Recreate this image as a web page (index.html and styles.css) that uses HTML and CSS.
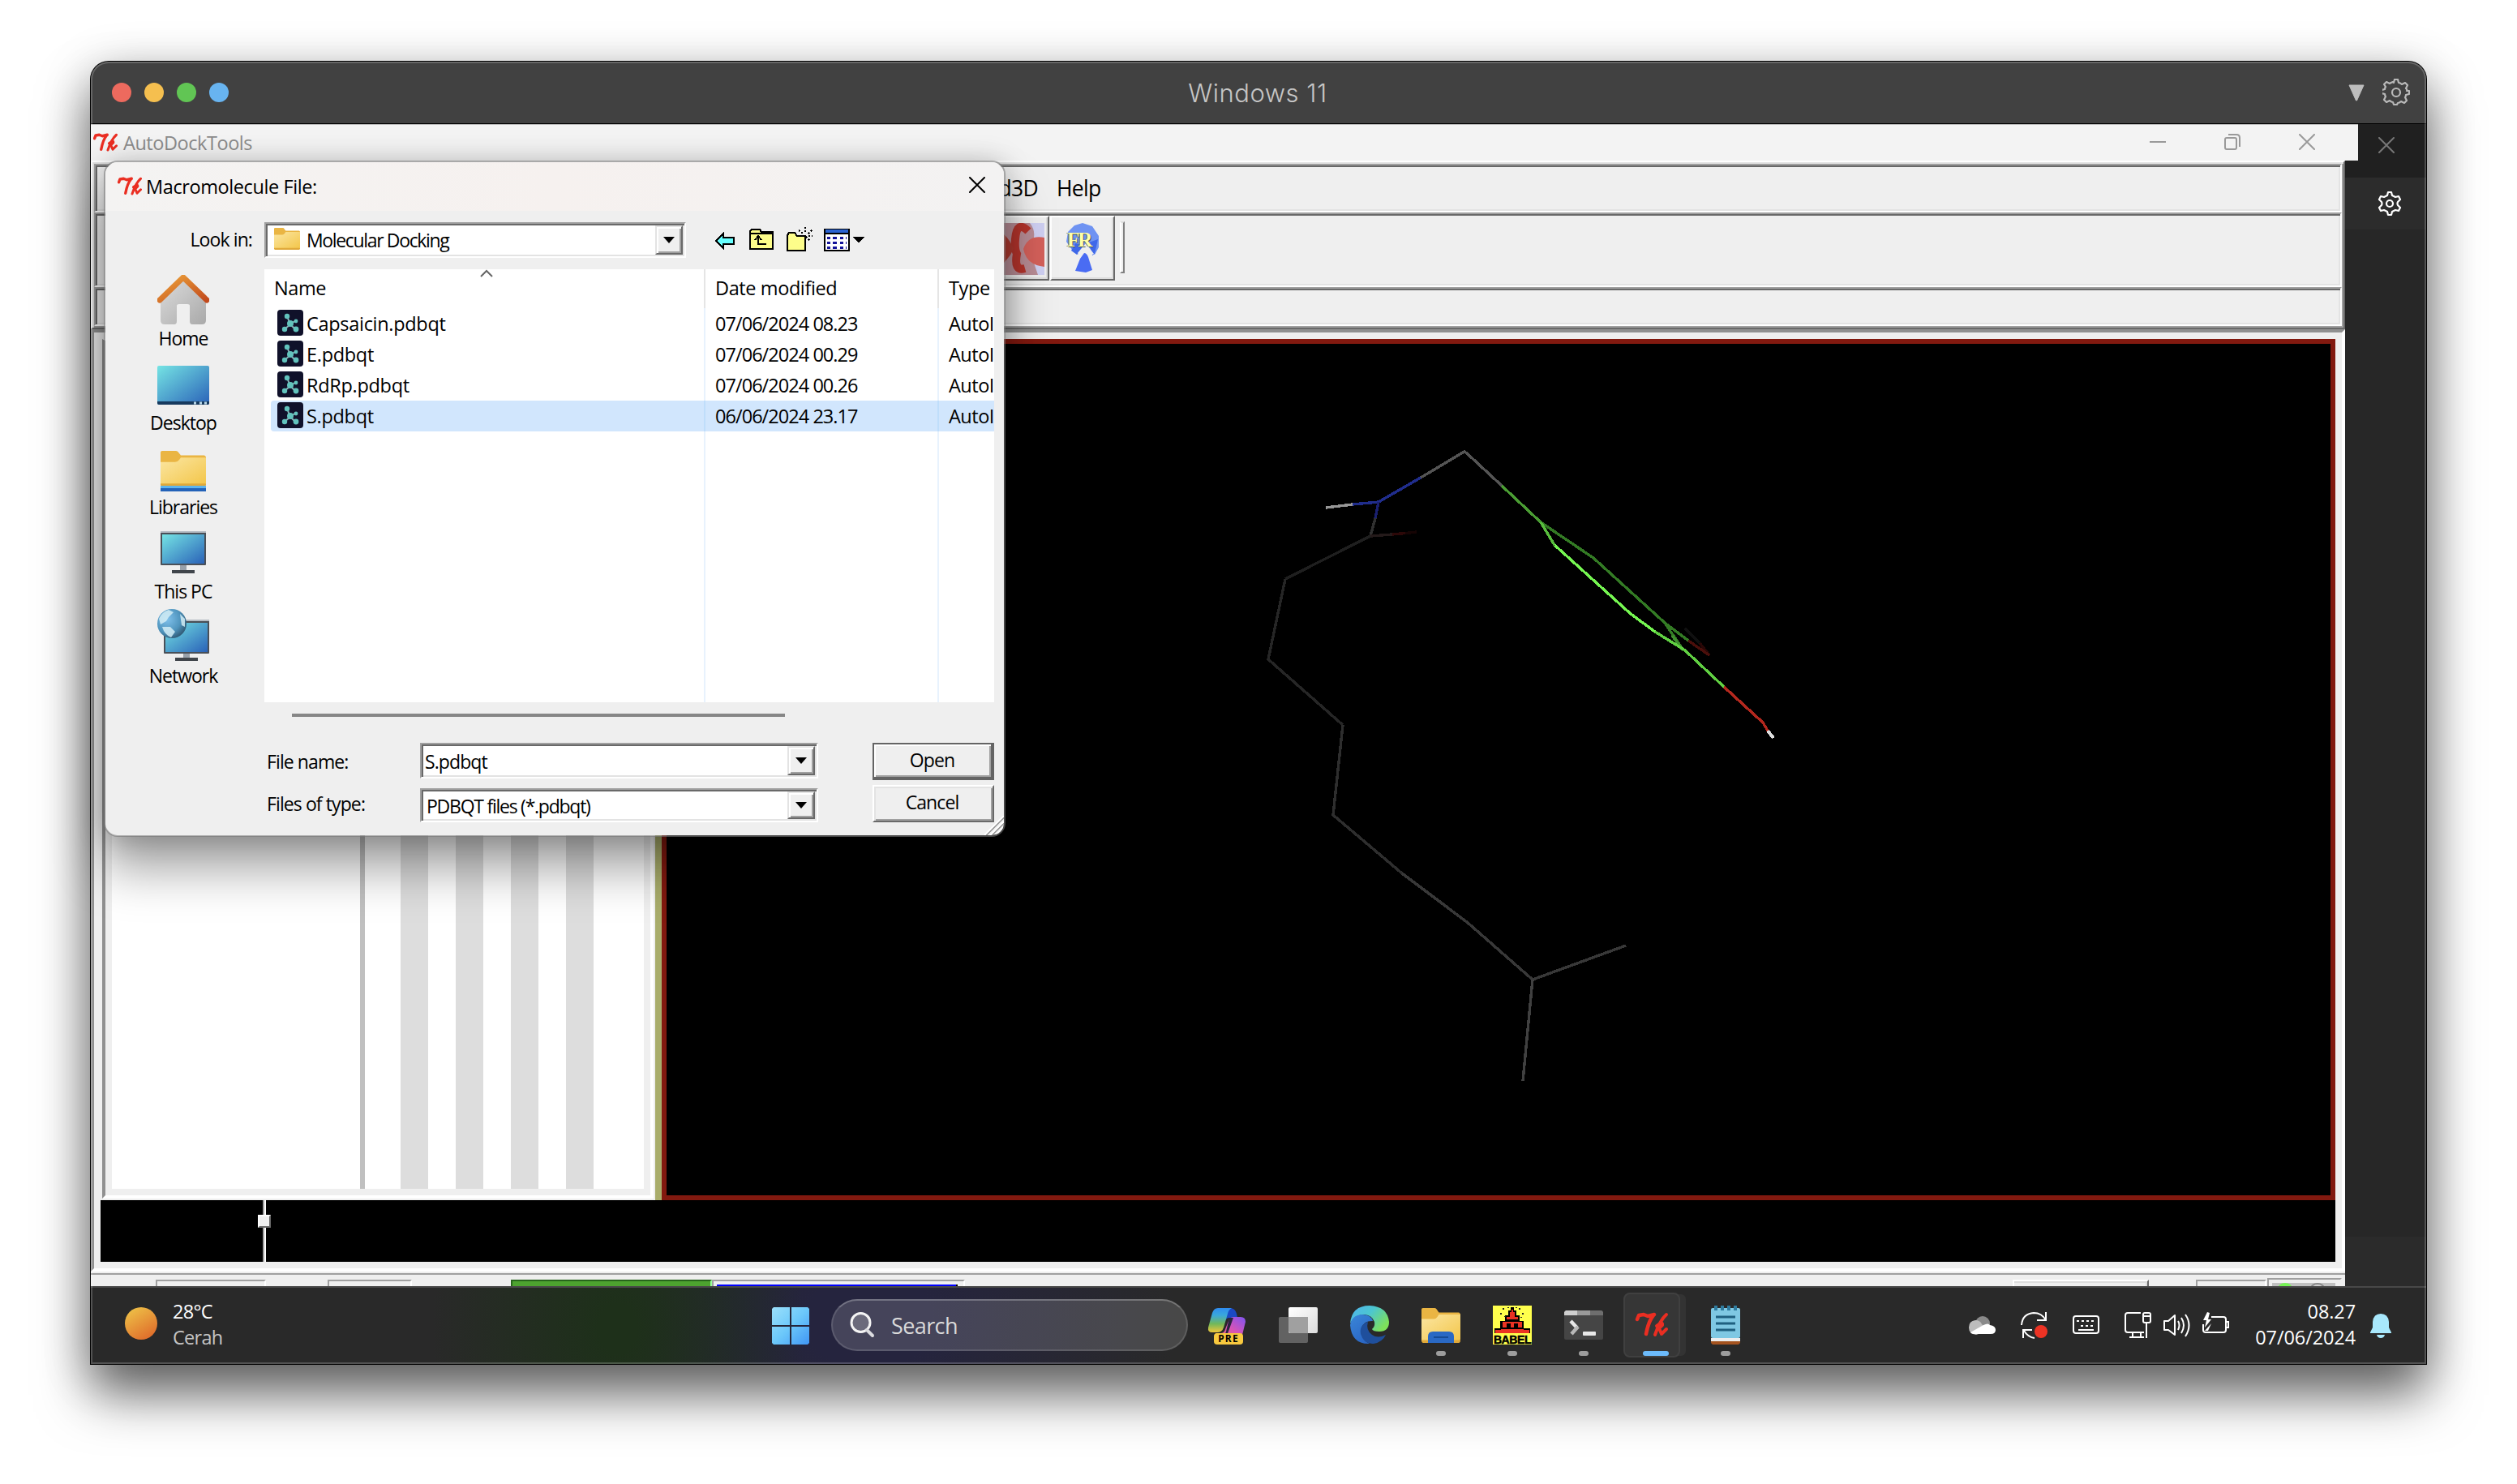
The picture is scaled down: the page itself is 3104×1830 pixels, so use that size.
FILE: index.html
```html
<!DOCTYPE html>
<html lang="en">
<head>
<meta charset="utf-8">
<title>Windows 11</title>
<link rel="stylesheet" href="styles.css">
</head>
<body>
<svg class="defs" aria-hidden="true">
  <defs>
    <linearGradient id="gFolder" x1="0" y1="0" x2="1" y2="1"><stop offset="0" stop-color="#fbe6a2"/><stop offset="1" stop-color="#f3c64a"/></linearGradient>
    <linearGradient id="gScreen" x1="0" y1="0" x2="1" y2="1"><stop offset="0" stop-color="#75e4e4"/><stop offset="1" stop-color="#2a62b8"/></linearGradient>
    <linearGradient id="gRoof" x1="0" y1="0" x2="1" y2="1"><stop offset="0" stop-color="#eda33a"/><stop offset="1" stop-color="#c24a1c"/></linearGradient>
    <linearGradient id="gWall" x1="0" y1="0" x2="1" y2="1"><stop offset="0" stop-color="#dcdcdc"/><stop offset="1" stop-color="#a9a9a9"/></linearGradient>
    <radialGradient id="gGlobe" cx=".35" cy=".35" r=".75"><stop offset="0" stop-color="#7fc0ea"/><stop offset=".6" stop-color="#4f94bd"/><stop offset="1" stop-color="#2b4f68"/></radialGradient>
    <linearGradient id="gSun" x1="0" y1="0" x2=".6" y2="1"><stop offset="0" stop-color="#efc94a"/><stop offset="1" stop-color="#e0702c"/></linearGradient>
    <linearGradient id="gWin" x1="0" y1="0" x2="1" y2="1"><stop offset="0" stop-color="#9be0fb"/><stop offset=".5" stop-color="#6cc8fa"/><stop offset="1" stop-color="#4096f5"/></linearGradient>
    <symbol id="tk" viewBox="0 0 40 32">
      <g fill="none" stroke="#ea2e22" stroke-linecap="round" stroke-linejoin="round">
        <path stroke-width="4.500" d="M2 9l2-5 6-1 5 2 8-2M22 4q-6 7-9 23"/>
        <path stroke-width="4" d="M38 3q-8 7-14 25M26 17q8-6 7-1l-5 5M29 20l3 7 6-6"/>
      </g>
    </symbol>
    <symbol id="pdb" viewBox="0 0 32 32">
      <rect width="32" height="32" rx="4" fill="#10112a"/>
      <path d="M12 8l4 10-7 6M16 18l7-5M16 18l7 7" stroke="#8cb0b8" stroke-width="2" fill="none"/>
      <g fill="#62c3bd"><circle cx="12" cy="8" r="3.2"/><circle cx="16" cy="17" r="4"/><circle cx="23" cy="14" r="2.4"/><circle cx="9" cy="24" r="3.2"/><circle cx="23" cy="24" r="3.4"/></g>
    </symbol>
    <symbol id="folder" viewBox="0 0 56 48" preserveAspectRatio="none">
      <path d="M0 2q0-2 2-2h17q2 0 3 2l3 4h29l2 2v8H0z" fill="#eab543"/><path d="M0 15h18q3 0 5-3l2-3h31v34q0 2-2 2H0z" fill="url(#gFolder)"/><path d="M0 44h56v1q0 3-2 3H2q-2 0-2-3z" fill="#e0a93a"/>
    </symbol>
    <symbol id="x" viewBox="0 0 20 20"><path d="M1 1l18 18M19 1L1 19" stroke="currentColor" stroke-width="2" fill="none" stroke-linecap="round"/></symbol>
    <symbol id="drop" viewBox="0 0 14 8"><path d="M0 0h14L7 8z"/></symbol>
  </defs>
</svg>

<main class="window">
  <header class="mac-bar">
    <div class="lights"><i class="red"></i><i class="yellow"></i><i class="green"></i><i class="blue"></i></div>
    <h1>Windows 11</h1>
    <div class="mac-tools">
      <svg width="20" height="21" viewBox="0 0 20 21"><path d="M1 1h18L10.500 20h-1z" fill="#bdbdbd" stroke="#bdbdbd" stroke-linejoin="round"/></svg>
      <svg width="34" height="34" viewBox="-17 -17 34 34" fill="none" stroke="#b9b9b9" stroke-width="2.200" stroke-linejoin="round"><circle r="5"/><path d="M-3-12l1-4h4l1 4q2 0 4 2l4-2 3 3-2 4q2 2 1 3l3 0v4l-4 1q0 2-1 3l2 4-3 3-4-2q-2 2-4 2l-1 2h-4l-1-3q-2 0-4-2l-4 2-3-3 2-4q-1-1-1-3l-4-1v-4l4-1q0-2 1-3l-2-3 3-3 4 2q1-1 4-2z"/></svg>
    </div>
  </header>

  <div class="desk-top">
    <div class="tk-title">
      <svg class="tk-ico" width="30" height="26"><use href="#tk"/></svg><span>AutoDockTools</span>
      <div class="tk-ctl">
        <svg width="20" height="20"><path d="M0 10h20" stroke="#999" stroke-width="2"/></svg>
        <svg width="20" height="20" fill="none" stroke="#999" stroke-width="2"><rect x="1" y="5" width="14" height="14" rx="2"/><path d="M5 1h10q4 0 4 4v11"/></svg>
        <svg width="20" height="20"><use href="#x"/></svg>
      </div>
    </div>
    <div class="side-x"><svg width="20" height="20"><use href="#x"/></svg></div>
  </div>

  <div class="desk">
    <div class="tk-body">
      <div class="bars">
        <div class="bar menu"><span>Grid3D</span><span>Help</span></div>
        <div class="bar tools">
          <div class="tool">
            <svg width="64" height="64" viewBox="0 0 64 64"><rect width="64" height="64" fill="#cfd0f2"/><path d="M10 0h36q8 10 4 22v24l6 18H10z" fill="#b98d96"/><path d="M44 10q-14-14-16 10-1 12 2 18-4 22 10 18" fill="none" stroke="#b5342c" stroke-width="10"/><path d="M64 18q-20-4-26 14 4 20 26 22z" fill="#d4605a"/><path d="M0 6q18 6 26 26-8 18-26 26z" fill="#b23a30"/></svg>
          </div>
          <div class="tool fr">
            <svg width="48" height="64" viewBox="0 0 48 64"><path d="M14 4l10-3 12 4 8 12v14l-5 9-11-12-10 12-7-6-7-10 2-12z" fill="#6f93f2"/><path d="M15 26l10 3-8 11-7-5zM32 25l11-4-4 18-3 2z" fill="#3f68e8"/><path d="M18 38l10-12 10 13-4 2H20z" fill="#efefef"/><path d="M26 38q3 0 5 5l5 16-8 3-13-2 6-15z" fill="#4a6cf3"/></svg>
            <b>FR</b>
          </div>
          <i class="grip"></i>
        </div>
        <div class="bar last"></div>
      </div>

      <div class="stage">
        <div class="viewer">
          <div class="tree">
            <div class="tree-in"><div class="names"></div><i></i><i></i><i></i><i></i></div>
          </div>
          <div class="sash"></div>
          <div class="canvas">
            <svg width="2052" height="1050" viewBox="822 424 2052 1050" fill="none" stroke-width="3.400" shape-rendering="crispEdges">
              <path d="M1635 626l33-4" stroke="#969696"/>
              <path d="M1668 622l32-3 52-30" stroke="#202d8c"/>
              <path d="M1700 619l-4 20" stroke="#1a2070"/>
              <path d="M1752 589l52-31 2-1 3 2 43 40" stroke="#545454"/>
              <path d="M1696 639l-6 22" stroke="#303030"/>
              <path d="M1690 661l27-2" stroke="#241a1a"/>
              <path d="M1717 659l16-1.500" stroke="#2c0808"/>
              <path d="M1733 657.500l14-1.500" stroke="#160404"/>
              <path d="M1690 661l-105 53" stroke="#1f1f1f"/>
              <path d="M1585 714l-21 99 92 81" stroke="#262626"/>
              <path d="M1656 894l-12 111 85 72" stroke="#2e2e2e"/>
              <path d="M1729 1077l80 60 81 71 115-42" stroke="#383838"/>
              <path d="M1890 1208l-12 125" stroke="#404040"/>
              <path d="M1852 599l48 45" stroke="#4a9c33"/>
              <path d="M1900 644l65 44 88 80 29 22M2053 768l23 34" stroke="#337a24"/>
              <path d="M2076 802l-14-18" stroke="#3f8f2e"/>
              <path d="M1900 644l17 28" stroke="#58bd3d"/>
              <path d="M1917 672l94 85 30 22" stroke="#75f551"/>
              <path d="M2041 779l37 23 48 45" stroke="#60cf42"/>
              <path d="M2078 775l18 18" stroke="#101010"/>
              <path d="M2096 793l12 15" stroke="#2a0706"/>
              <path d="M2082 790l26 18" stroke="#4b0f0b"/>
              <path d="M2126 847l48 44 6 10" stroke="#b3281e"/>
              <path d="M2180 901l7 9" stroke="#dedede" stroke-width="4"/>
            </svg>
          </div>
        </div>
        <div class="strip"><div class="slider"><i></i></div></div>
      </div>
      <div class="status">
        <i class="well w1"></i><i class="well w2"></i><i class="prog"></i><i class="well w3"><b></b></i>
        <i class="btn"></i><i class="well w4"></i><i class="well leds"><b><u></u><u class="off"></u></b></i>
      </div>
    </div>
    <aside class="side">
      <div class="side-a"></div>
      <div class="side-gear"><svg width="32" height="32" viewBox="-16 -16 32 32" fill="none" stroke="#fff" stroke-width="2.200" stroke-linejoin="round"><circle r="4"/><path d="M-3-10l1-4h4l1 4 4 2 4-1 2 4-3 3q-1 2 0 4l3 3-2 4-4-1-4 2-1 4h-4l-1-4-4-2-4 1-2-4 3-3q1-2 0-4l-3-3 2-4 4 1z"/></svg></div>
      <div class="side-b"></div>
      <div class="side-c"></div>
    </aside>
  </div>

  <footer class="taskbar">
    <svg class="sun" width="40" height="40"><circle cx="20" cy="20" r="20" fill="url(#gSun)"/></svg>
    <div class="weather"><span>28°C</span><span class="dim">Cerah</span></div>
    <svg class="start" width="46" height="46" viewBox="0 0 46 46" fill="url(#gWin)"><path d="M2 0h20v22H0V2zM24 0h20l2 2v20H24zM0 24h22v22H2l-2-2zM24 24h22v20l-2 2H24z"/></svg>
    <div class="search"><svg width="31" height="32" viewBox="0 0 31 32" fill="none"><circle cx="13.500" cy="13" r="11.500" fill="#6b6a7b" stroke="#f4f4f4" stroke-width="3"/><path d="M21 22l7 7" stroke="#dcdce0" stroke-width="4" stroke-linecap="round"/></svg><span>Search</span></div>
    <div class="apps">
      <div class="app pre">
        <svg width="48" height="48" viewBox="0 0 48 48"><defs><linearGradient id="c1" x1="0" y1="0" x2="0" y2="1"><stop offset="0" stop-color="#2f8cf0"/><stop offset=".3" stop-color="#3aa8dc"/><stop offset=".65" stop-color="#71b85a"/><stop offset="1" stop-color="#f0c53a"/></linearGradient><linearGradient id="c2" x1="1" y1="0" x2="0" y2="1"><stop offset="0" stop-color="#7e55f2"/><stop offset=".5" stop-color="#d553b8"/><stop offset="1" stop-color="#f2706a"/></linearGradient></defs><path d="M26 3q8-1 10 7l1 5H27q-5 0-7 8z" fill="#1b49c4"/><path d="M13 3h17q-4 2-5 7l-5 17q-2 6-8 6H6q-6 0-5-6L6 9q2-6 7-6z" fill="url(#c1)"/><path d="M32 14h9q6 0 6 6l-4 16-4 4H16q-6 0-6-6h6q5 0 6-5l4-10q2-5 6-5z" fill="url(#c2)"/><path d="M27 15h5l-8 22h-5q3-1 4-5z" fill="#2a2540"/></svg>
        <b>PRE</b>
      </div>
      <div class="app"><svg width="48" height="48" viewBox="0 0 48 48"><defs><linearGradient id="tv" x1="0" y1="0" x2="1" y2="1"><stop offset="0" stop-color="#fff"/><stop offset="1" stop-color="#dcdcdc"/></linearGradient></defs><rect y="14" width="36" height="32" rx="2" fill="#626262"/><rect x="12" y="2" width="36" height="32" rx="2" fill="url(#tv)"/><path d="M12 14h24v20H14l-2-2z" fill="#a0a0a0"/></svg></div>
      <div class="app"><svg width="48" height="48" viewBox="0 0 48 48"><defs><linearGradient id="e1" x1="0" y1="0" x2="1" y2=".6"><stop offset="0" stop-color="#4fb2f0"/><stop offset=".5" stop-color="#4cc6d0"/><stop offset="1" stop-color="#7ee05a"/></linearGradient><linearGradient id="e2" x1="0" y1="0" x2=".6" y2="1"><stop offset="0" stop-color="#3a86d8"/><stop offset="1" stop-color="#2a66c4"/></linearGradient></defs><path d="M0 22Q2 0 24 0q22 1 24 20 0 12-12 12-8 0-9-3 4-3 3-9-3-8-12-9Q5 11 0 22z" fill="url(#e1)"/><path d="M0 24q2-12 14-13 12 0 14 8-10-1-14 8-2 14 10 20Q2 48 0 24z" fill="url(#e2)"/><path d="M22 20q-11 4-9 15 4 13 16 12 11-2 15-11-10 5-17 0-8-6-5-16z" fill="#1f4f9c"/></svg></div>
      <div class="app run"><svg width="48" height="43"><use href="#folder"/><path d="M8 43V35q0-6 6-6h20q6 0 6 6v8z" fill="#2a69c4"/><path d="M15 36h18" stroke="#174b94" stroke-width="2"/></svg></div>
      <div class="app run babel">
        <svg width="48" height="48" viewBox="0 0 48 48" shape-rendering="crispEdges"><rect width="48" height="48" fill="#ffff4d"/><path d="M22 2h4v4h3v6h4v7h5v9h8v6H2v-6h7v-9h6v-7h4V6h3z" fill="#000"/><path d="M23 5h2v3h2v6h4v3H17v-3h4V8h2zM12 20h24v7h-5v-5h-5v5h-4v-5h-5v5h-5zM10 29h28v1h7v4H3v-4h7z" fill="#ea3323"/><path d="M12 3h2v2h-2zM32 3h2v2h-2zM9 9h2v2H9zM36 9h2v2h-2zM14 13h2v1h-2zM34 14h2v1h-2zM18 2h2v1h-2zM28 2h2v1h-2z" fill="#222"/></svg>
        <b>BABEL</b>
      </div>
      <div class="app run"><svg width="48" height="36"><rect width="48" height="36" rx="2" fill="#454545"/><path d="M0 6V2l2-2h14v6z" fill="#cfcfcf"/><path d="M16 0h16v6H16z" fill="#9a9a9a"/><path d="M32 0h14l2 2v4H32z" fill="#6e6e6e"/><path d="M8 13l8 8.500" stroke="#e8e8e8" stroke-width="4.500"/><path d="M17 20l-8 9" stroke="#b8b8b8" stroke-width="4.500"/><rect x="23" y="26" width="16" height="5" rx="1" fill="#e8e8e8"/></svg></div>
      <div class="app active"><svg width="42" height="32"><use href="#tk"/></svg></div>
      <div class="app run"><svg width="36" height="48"><rect y="3" width="36" height="37" rx="2" fill="#7fc8e3"/><path d="M0 40h36v4H0z" fill="#ededed"/><path d="M0 44h36v2l-2 2H2l-2-2z" fill="#a4531f"/><path d="M6 14h24M6 22h24M6 30h24" stroke="#1f6080" stroke-width="3"/><path d="M6 0v6M14 0v6M22 0v6M30 0v6" stroke="#2f7c9f" stroke-width="4"/></svg></div>
    </div>
    <div class="tray">
      <svg width="33" height="34" viewBox="0 0 33 34"><circle cx="17" cy="15" r="9" fill="#8a8a8a"/><path d="M0 20q0-8 8-9 6 0 8 5l8 8-15 5Q0 28 0 20z" fill="#bdbdbd"/><path d="M2 26l16-9q6-3 8 0 7 1 7 6 0 5-6 5H7q-4 0-5-2z" fill="#fff"/></svg>
      <svg class="sync" width="33" height="34" viewBox="0 0 33 34" fill="none" stroke="#fff" stroke-width="2"><path d="M1 17Q2 3 16 2q10 0 15 9M31 1v10H20M3 33V23h11M4 24q5 8 13 9"/><circle cx="25" cy="25" r="8" fill="#ed3324" stroke="none"/></svg>
      <svg width="33" height="34" viewBox="0 0 33 34" fill="none" stroke="#fff" stroke-width="2"><rect x="1" y="6" width="31" height="21" rx="3"/><path d="M5 12h23M10 18h17" stroke-dasharray="3 3"/><path d="M7 23h19"/></svg>
      <svg class="net" width="33" height="34" viewBox="0 0 33 34" fill="none" stroke="#fff" stroke-width="2"><path d="M20 2H4q-3 0-3 3v18q0 3 3 3h20M10 26v6M20 26v6M6 32h18M27 14v19"/><rect x="23" y="2" width="9" height="12" rx="2"/><path d="M23 6h9"/></svg>
      <svg width="33" height="34" viewBox="0 0 33 34" fill="none" stroke="#fff" stroke-width="2" stroke-linejoin="round"><path d="M1 12h5l8-7v24l-8-6H1zM18 12q3 5 0 11M22 8q6 9 0 19M27 4q9 13 0 27"/></svg>
      <svg width="33" height="34" viewBox="0 0 33 34" fill="none" stroke="#fff" stroke-width="2"><path d="M11 7h15q3 0 3 3v13q0 3-3 3H4q-3 0-3-3v-7M29 13h3v7h-3"/><path d="M6 1L1 11h4L3 20l8-10H7l2-8zM3 24l8-9-4 9z" fill="#fff" stroke="none"/></svg>
    </div>
    <div class="clock"><span>08.27</span><span>07/06/2024</span></div>
    <svg class="bell" width="26" height="31" viewBox="0 0 26 31" fill="#a8e8fc"><path d="M3 10Q4 0 13 0t10 10v7l3 6v1H0v-1l3-6zM8 26h10q-1 4-5 4t-5-4z"/></svg>
  </footer>

  <section class="dialog">
    <header class="dlg-title"><svg class="tk-ico" width="30" height="26"><use href="#tk"/></svg><span>Macromolecule File:</span><svg class="dlg-x" width="20" height="20"><use href="#x"/></svg></header>
    <div class="look">
      <label>Look in:</label>
      <div class="combo"><svg width="32" height="27"><use href="#folder"/></svg><span>Molecular Docking</span><i><svg width="14" height="8"><use href="#drop"/></svg></i></div>
      <svg class="nav" width="190" height="34" viewBox="880 278 190 34" shape-rendering="crispEdges" stroke="#000" stroke-width="2">
        <path d="M883 297l9-9v5h13v8h-13v5z" fill="#6ff"/>
        <path d="M925 307v-22l2-2h10l2 3h14v21z" fill="#fdfd8a"/><path d="M925 288h28M935 292v9h10M931 296l4-5 4 5" fill="none"/>
        <path d="M971 309v-19l2-3h7l3 4h10v18z" fill="#fdfd8a"/><path d="M993 280v7M985 284l5 4M1001 284l-5 5M994 292l6 6M997 291h5M985 291h5" stroke-dasharray="2 2" fill="none"/>
        <path d="M1017 283h30v26h-30z" fill="#fff"/><path d="M1018 285h28" stroke="#2a62d0" stroke-width="4"/><path d="M1017 288h30" /><path d="M1020 293h24M1020 299h24M1020 305h24" stroke="#14149a" stroke-width="3" stroke-dasharray="4 3 5 4"/>
        <path d="M1052 292h14l-7 8z" stroke="none"/>
      </svg>
    </div>
    <div class="mid">
      <nav class="places">
        <div><svg width="64" height="62" viewBox="0 0 64 62"><path d="M4 30L32 6l28 24v26q0 5-5 5H43q-3 0-3-4V38q0-2-3-2H27q-3 0-3 2v19q0 4-3 4H9q-5 0-5-5z" fill="url(#gWall)"/><path d="M3 31L32 3l29 28" fill="none" stroke="url(#gRoof)" stroke-width="7" stroke-linejoin="round" stroke-linecap="round"/></svg><span>Home</span></div>
        <div><svg width="64" height="62" viewBox="0 0 64 62"><rect y="8" width="64" height="48" rx="2" fill="url(#gScreen)"/><path d="M0 52h64v2q0 2-2 2H2q-2 0-2-2z" fill="#173a5e"/><path d="M45 54h3M52 54h3M58 54h3" stroke="#b9d8ea" stroke-width="3"/></svg><span>Desktop</span></div>
        <div><svg width="64" height="62" viewBox="0 0 64 62"><svg x="4" y="9" width="56" height="44"><use href="#folder"/></svg><path d="M4 52h56v3H4z" fill="#5db4ee"/><path d="M4 55h56v4H4z" fill="#2362b8"/></svg><span>Libraries</span></div>
        <div><svg width="64" height="62" viewBox="0 0 64 62"><rect x="4" y="4" width="56" height="42" rx="1" fill="#4a5058"/><path d="M4 4h56v2H4z" fill="#b5bcc4"/><rect x="6" y="8" width="52" height="36" fill="url(#gScreen)"/><path d="M28 46h8v6h-8z" fill="#99a1aa"/><path d="M18 52h28v4H18z" fill="#40454b"/></svg><span>This PC</span></div>
        <div><svg width="64" height="66" viewBox="0 -4 64 66"><rect x="8" y="9" width="56" height="42" rx="1" fill="#4a5058"/><path d="M8 9h56v2H8z" fill="#b5bcc4"/><rect x="10" y="13" width="52" height="36" fill="url(#gScreen)"/><path d="M32 51h8v5h-8z" fill="#99a1aa"/><path d="M22 56h28v4H22z" fill="#40454b"/><circle cx="18" cy="14" r="18" fill="url(#gGlobe)"/><path d="M2 8q3-8 12-11l6 3-6 6-3 5-7 4zM6 18l10 0 6 6-5 7q-8-3-11-13zM28 2l6 6v10l-4-2z" fill="#d3edf6" opacity=".85"/></svg><span>Network</span></div>
      </nav>
      <div class="list">
        <svg class="caret" width="16" height="10"><path d="M1 9l7-7 7 7" fill="none" stroke="#666" stroke-width="2"/></svg>
        <div class="head"><span>Name</span><span>Date modified</span><span>Type</span></div>
        <div class="row"><span><svg width="32" height="32"><use href="#pdb"/></svg>Capsaicin.pdbqt</span><span>07/06/2024 08.23</span><span>AutoI</span></div>
        <div class="row"><span><svg width="32" height="32"><use href="#pdb"/></svg>E.pdbqt</span><span>07/06/2024 00.29</span><span>AutoI</span></div>
        <div class="row"><span><svg width="32" height="32"><use href="#pdb"/></svg>RdRp.pdbqt</span><span>07/06/2024 00.26</span><span>AutoI</span></div>
        <div class="row sel"><span><svg width="32" height="32"><use href="#pdb"/></svg>S.pdbqt</span><span>06/06/2024 23.17</span><span>AutoI</span></div>
        <div class="row rest"><span></span><span></span><span></span></div>
      </div>
    </div>
    <div class="thumb"></div>
    <div class="form">
      <label>File name:</label>
      <div class="combo"><span>S.pdbqt</span><i><svg width="14" height="8"><use href="#drop"/></svg></i></div>
      <button class="default">Open</button>
      <label>Files of type:</label>
      <div class="combo short"><span>PDBQT files (*.pdbqt)</span><i><svg width="14" height="8"><use href="#drop"/></svg></i></div>
      <button>Cancel</button>
    </div>
    <svg class="resize" width="24" height="24" stroke="#8f8f8f" stroke-width="2"><path d="M2 24L24 2M9 24L24 9M16 24l8-8"/><path d="M0 24L24 0M7 24L24 7M14 24l10-10" stroke="#fff"/></svg>
  </section>
</main>
</body>
</html>
```

FILE: styles.css
```css
* { box-sizing: border-box; }
body { margin: 0; width: 3104px; height: 1830px; background: #fff; overflow: hidden; padding: 76px 112px; font-family: "Open Sans", "Noto Sans", sans-serif; font-size: 23.5px; color: #000; }
svg { display: block; flex: none; }
.defs { position: absolute; width: 0; height: 0; }
i, u { font-style: normal; text-decoration: none; display: block; }

.window { position: relative; width: 2880px; height: 1606px; display: flex; flex-direction: column; border-radius: 22px 22px 0 0; background: #272727; box-shadow: 0 0 0 1px #000, 0 38px 64px rgba(0,0,0,.56), 0 10px 60px rgba(0,0,0,.22); }
.window::after { content: ""; position: absolute; inset: 0; border-radius: 22px 22px 0 0; box-shadow: inset 0 0 0 2px rgba(255,255,255,.2); pointer-events: none; }

.mac-bar { height: 77px; flex: none; display: grid; grid-template-columns: 1fr auto 1fr; align-items: center; background: #414141; border-bottom: 1px solid #000; border-radius: 22px 22px 0 0; padding: 0 20px 0 18px; }
.lights { display: flex; gap: 16px; padding-left: 8px; }
.lights i { width: 24px; height: 24px; border-radius: 50%; }
.red { background: #ed6a5e; } .yellow { background: #f5bf4f; } .green { background: #61c554; } .blue { background: #68b4f0; }
.mac-bar h1 { margin: 0; font: 300 31px "Inter", "Liberation Sans", sans-serif; letter-spacing: .5px; color: #c6c6c6; }
.mac-tools { display: flex; gap: 22px; align-items: center; justify-content: flex-end; }

.desk-top { display: flex; height: 45px; flex: none; background: #202020; }
.tk-title { width: 2796px; display: flex; align-items: center; background: #f3f3f3; border-top: 1px solid #b8b8b8; color: #8c8c8c; padding: 0 53px 0 3px; }
.tk-title .tk-ico { margin-right: 7px; }
.tk-title span { letter-spacing: -.45px; }
.tk-ctl { margin: -3px 0 0 auto; display: flex; gap: 72px; color: #999; }
.side-x { padding: 16px 0 0 25px; color: #777; }

.desk { display: flex; height: 1388px; flex: none; }
.tk-body { width: 2780px; background: #efefef; display: flex; flex-direction: column; }
.bars { height: 208px; flex: none; border: 2px solid; border-color: #fff #696969 #696969 #fff; box-shadow: inset 2px 2px #e3e3e3, inset -2px -2px #a0a0a0; padding: 2px; }
.bar { border: 2px solid; border-color: #a0a0a0 #fff #fff #a0a0a0; box-shadow: inset 2px 2px #696969, inset -2px -2px #e3e3e3; }
.menu { height: 60px; padding: 0 0 0 1060px; display: flex; gap: 23px; justify-content: flex-start; line-height: 56px; font-size: 26.500px; }
.menu span { letter-spacing: -.7px; }
.menu span:first-child { width: 102px; text-align: right; }
.tools { height: 92px; display: flex; padding: 2px 0 0 1079px; }
.tool { width: 97px; height: 80px; border: 2px solid; border-color: #fff #696969 #696969 #fff; box-shadow: inset -2px -2px #ddd; padding: 7px 0 0 25px; }
.fr { width: 80px; margin-left: 1px; padding: 6px 0 0 14px; position: relative; }
.fr b { position: absolute; left: 19px; top: 13px; font: 700 25px/30px "Liberation Serif", serif; color: #ffffa8; text-shadow: 1px 1px #455, -1px 0 #667; letter-spacing: -2px; }
.grip { width: 6px; height: 64px; margin: 7px 0 0 6px; border: 2px solid; border-color: #ddd #808080 #808080 #fff; }
.last { height: 48px; border-top-color: #a0a0a0; }

.stage { border: 4px solid; border-color: #909090 #fff #fff #909090; padding: 8px; flex: none; }
.viewer { display: flex; height: 1062px; }
.tree { width: 680px; margin: 0 2px 2px; border: 4px solid #fff; border-top: 2px solid #fff; border-left-color: #909090; padding: 8px; }
.tree-in { height: 100%; background: #fff; display: flex; gap: 34px; }
.names { width: 312px; border-right: 6px solid #c0c0c0; margin-right: 10px; }
.tree-in i { width: 34px; background: #ddd; }
.sash { width: 8px; background: #a9ad6b; }
.canvas { flex: 1; background: #000; border: 6px solid #82190f; }
.strip { height: 76px; background: #000; padding-left: 194px; }
.slider { width: 16px; height: 76px; padding-top: 18px; background: linear-gradient(90deg, transparent 6px, #a0a0a0 6px 8px, #fff 8px 10px, transparent 10px); }
.slider i { height: 16px; background: #efefef; border: 2px solid; border-color: #fff #696969 #696969 #fff; }
.status { margin-top: 2px; height: 16px; border-top: 2px solid #a0a0a0; display: flex; align-items: flex-end; overflow: hidden; padding: 0 4px 0 80px; }
.well { height: 8px; border: 2px solid #a0a0a0; border-bottom: 0; border-right-color: #fff; }
.w1 { width: 136px; } .w2 { width: 104px; margin-left: 76px; }
.prog { width: 248px; height: 8px; margin-left: 122px; background: #4da32f; border-top: 2px solid #28651c; border-left: 2px solid #28651c; border-right: 2px solid #9f9; }
.w3 { width: 312px; padding: 4px 7px 0 4px; }
.w3 b { display: block; height: 4px; background: #00f; border-right: 2px solid #000; }
.btn { width: 168px; height: 8px; margin-left: auto; border: 2px solid #fff; border-bottom: 0; border-right-color: #696969; box-shadow: inset -2px 2px #ddd; }
.w4 { width: 87px; margin-left: 58px; }
.leds { width: 92px; height: 10px; margin-left: 1px; padding: 4px 6px 0 4px; border-right-color: #efefef; }
.leds b { display: flex; gap: 22px; height: 6px; background: #c0c0c0; padding-left: 7px; overflow: hidden; }
.leds u { width: 18px; height: 14px; border-radius: 50%; background: #76f455; }
.leds .off { background: #d0d0d0; border: 2px solid #888; }
.side { flex: 1; display: flex; flex-direction: column; }
.side-a { height: 21px; background: #202020; }
.side-gear { height: 64px; background: #2c2c2c; padding: 16px 0 0 39px; }
.side-b { height: 1242px; background: #272727; }
.side-c { flex: 1; background: #2b2b2b; }

.taskbar { flex: none; height: 96px; border-top: 2px solid #484848; background: radial-gradient(ellipse 230px 300px at 650px 50px, #1e301a 10%, transparent), radial-gradient(ellipse 380px 300px at 960px 40px, #25243e 20%, transparent), #292929; display: flex; align-items: flex-start; color: #fff; }
.sun { margin: 24px 0 0 42px; }
.weather { width: 140px; margin: 13px 0 0 19px; display: flex; flex-direction: column; line-height: 32px; letter-spacing: -.7px; }
.dim { color: #c4c4c4; }
.start { margin: 24px 0 0 599px; }
.search { margin: 14px 0 0 27px; width: 440px; height: 64px; border-radius: 32px; border: 2px solid rgba(255,255,255,.12); border-top-color: rgba(255,255,255,.25); background: rgba(255,255,255,.15); display: flex; align-items: center; gap: 20px; padding-left: 21px; color: #dadada; font-size: 27px; line-height: 60px; letter-spacing: -.6px; }
.search span { padding-top: 2px; }
.apps { display: flex; margin-left: 4px; }
.app { position: relative; width: 88px; height: 92px; display: flex; align-items: center; justify-content: center; }
.run::after { content: ""; position: absolute; left: 38px; top: 78px; width: 12px; height: 6px; border-radius: 3px; background: #9d9d9d; }
.pre b { position: absolute; left: 28px; top: 56px; width: 36px; height: 14px; border-radius: 4px; background: #f8c93f; color: #000; font: 700 12px/14px "Noto Sans", sans-serif; text-align: center; letter-spacing: 1.200px; }
.babel b { position: absolute; left: 20px; top: 57px; width: 48px; text-align: center; color: #000; font: 700 14px/14px "Liberation Sans", sans-serif; letter-spacing: -.4px; -webkit-text-stroke: .5px #000; }
.active { width: 70px; height: 80px; margin: 6px 12px 0 5px; border-radius: 8px; background: #363636; border: 2px solid #404040; box-shadow: 9px 0 0 -2px #333; padding-bottom: 0; }
.active::after { content: ""; position: absolute; left: 22px; top: 70px; width: 32px; height: 6px; border-radius: 3px; background: #6cbbfb; }
.tray { display: flex; margin: 29px 0 0 auto; gap: 31px; }
.tray .net { margin-right: -16px; }
.tray svg:last-child { margin-left: -16px; }
.clock { width: 156px; margin: 13px 0 0; text-align: right; display: flex; flex-direction: column; line-height: 32px; letter-spacing: -.1px; }
.bell { margin: 32px 43px 0 18px; }

.dialog { position: absolute; left: 16px; top: 122px; width: 1112px; height: 834px; border-radius: 17px; background: #efefef; border: 2px solid rgba(120,120,120,.6); background-clip: padding-box; box-shadow: 0 40px 60px rgba(0,0,0,.36), 0 2px 34px rgba(0,0,0,.22); display: flex; flex-direction: column; overflow: hidden; }
.dlg-title { height: 60px; flex: none; background: linear-gradient(90deg, #f4f3f2, #f6f1ef 50%, #f3f2f2); display: flex; align-items: center; padding: 0 23px 0 15px; }
.dlg-title span { margin-left: 5px; letter-spacing: -.4px; }
.dlg-x { margin: -4px 0 0 auto; }
.look { height: 72px; flex: none; display: grid; grid-template-columns: 181px 520px auto; column-gap: 15px; padding-top: 14px; align-items: start; letter-spacing: -.9px; font-size: 23px; }
.look label { text-align: right; line-height: 43px; }
.look .nav { margin: 4px 0 0 19px; }
.combo { height: 44px; background: #fff; border: 2px solid; border-color: #a0a0a0 #fff #fff #a0a0a0; box-shadow: inset 2px 2px #696969, inset -2px -2px #e3e3e3; display: flex; align-items: center; padding: 2px; line-height: 40px; }
.look .combo svg:first-child { margin: -3px 8px 0 8px; }
.look .combo span { letter-spacing: -1.35px; }
.combo i { margin: 0 0 0 auto; width: 34px; height: 100%; background: #efefef; border: 2px solid; border-color: #e3e3e3 #696969 #696969 #e3e3e3; box-shadow: inset 2px 2px #fff, inset -2px -2px #a0a0a0; display: flex; align-items: center; justify-content: center; }
.look .combo i svg:first-child { margin: 0; }
.mid { display: flex; height: 534px; flex: none; }
.places { width: 192px; margin-right: 4px; display: flex; flex-direction: column; padding-top: 7px; font-size: 23px; letter-spacing: -1px; }
.places div { height: 104px; display: flex; flex-direction: column; align-items: center; }
.places span { line-height: 32px; }
.places div:last-child svg { margin-top: -4px; }
.list { position: relative; width: 900px; background: #fff; overflow: hidden; display: flex; flex-direction: column; letter-spacing: -.4px; }
.caret { position: absolute; left: 266px; top: 0; }
.head, .row { display: grid; grid-template-columns: 544px 288px 1fr; height: 38px; line-height: 38px; white-space: nowrap; flex: none; }
.head { height: 48px; line-height: 47px; }
.head span { padding-left: 12px; border-right: 2px solid #e5e5e5; }
.row { margin-left: 8px; grid-template-columns: 536px 288px 1fr; }
.row span { padding-left: 12px; border-right: 2px solid #e8f2fd; letter-spacing: -.95px; }
.row span:first-child { display: flex; padding-left: 8px; gap: 4px; letter-spacing: -.3px; }
.row svg { margin-top: 2px; }
.row span:last-child, .head span:last-child { border: 0; }
.row span:last-child { letter-spacing: -.5px; }
.sel { background: #d1e6fd; border-radius: 4px 0 0 4px; }
.sel span { border-color: #bfdefb; }
.row.rest { height: auto; flex: 1; }
.thumb { width: 608px; height: 4px; background: #868686; margin: 14px 0 32px 230px; flex: none; }
.form { display: grid; grid-template-columns: 189px 491px 150px; column-gap: 0; margin-left: 199px; grid-template-rows: 52px 48px; font-size: 23px; letter-spacing: -.9px; justify-content: start; }
.form label { line-height: 46px; }
.form .short { height: 42px; margin-top: 4px; line-height: 38px; }
.form .combo span { padding-left: 2px; padding-top: 2px; }
.form .short span { padding-left: 4px; padding-top: 1px; letter-spacing: -1.25px; }
button { margin: 0 0 0 67px; width: 150px; height: 46px; font: inherit; letter-spacing: inherit; color: #000; background: #efefef; border: 2px solid; border-color: #fff #696969 #696969 #fff; box-shadow: inset 2px 2px #e3e3e3, inset -2px -2px #a0a0a0; padding: 0 3px 4px 0; line-height: 36px; }
.default { border-color: #646464; box-shadow: inset -2px -2px #646464, inset 2px 2px #fff, inset -4px -4px #a0a0a0; }
.resize { position: absolute; right: 0; bottom: 0; }
```
